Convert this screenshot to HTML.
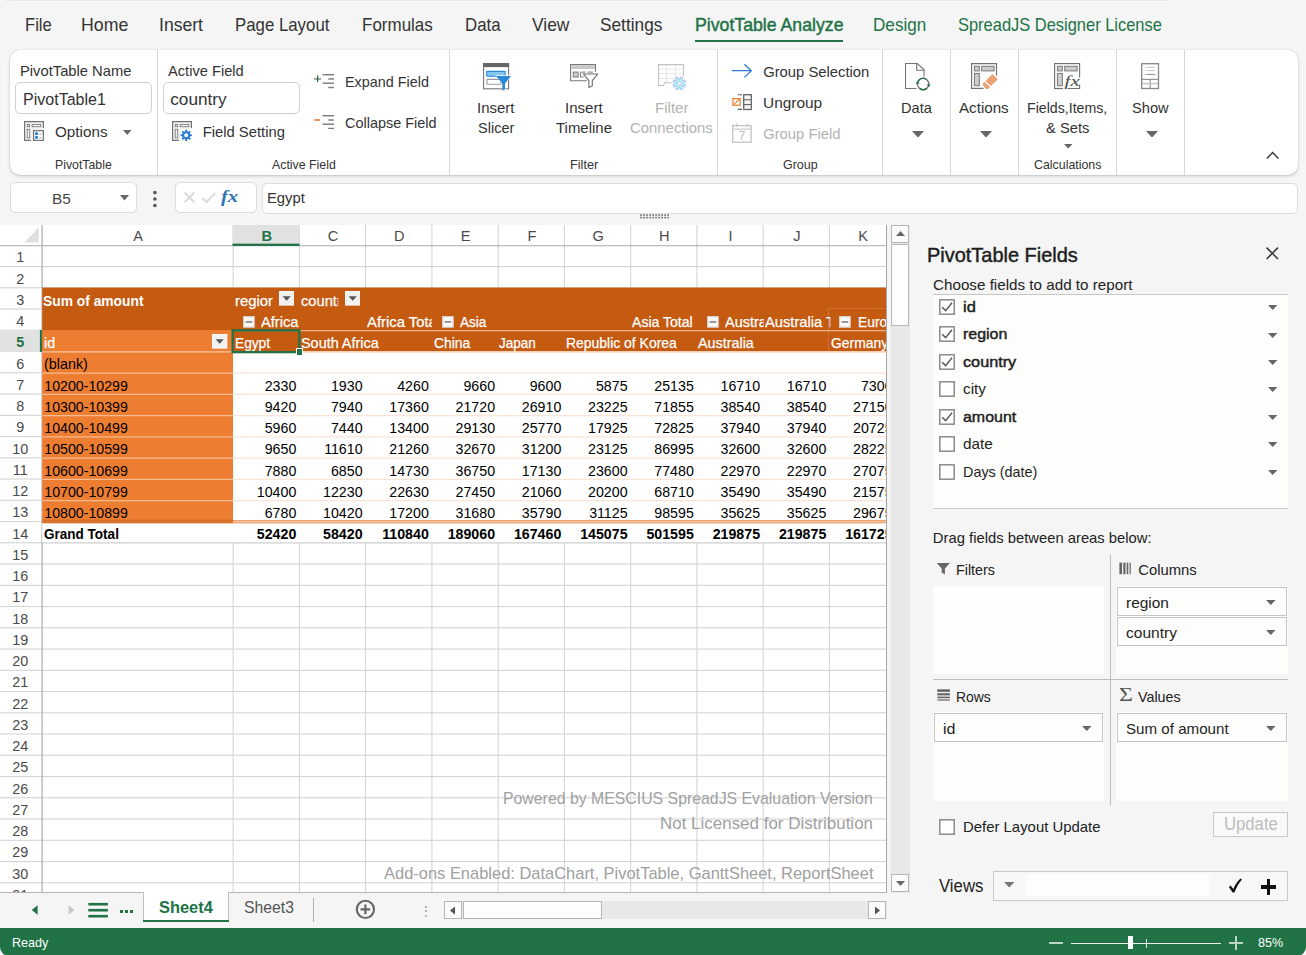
<!DOCTYPE html>
<html lang="en"><head><meta charset="utf-8"><title>PivotTable Designer</title>
<style>
html,body{margin:0;padding:0}
body{width:1306px;height:955px;overflow:hidden;background:#f5f5f5;font-family:"Liberation Sans",sans-serif;color:#333}
#app{position:relative;width:1306px;height:955px;overflow:hidden;background:#f5f5f5}
.t{position:absolute;white-space:nowrap;display:block;transform-origin:0 0}
.box{position:absolute;box-sizing:border-box}
</style></head><body>
<div id="app">
<div style="position:absolute;left:8px;top:0px;width:1161px;height:1px;background:#e9e9e9;"></div>
<div style="position:absolute;left:8px;top:1px;width:1161px;height:1px;background:#f8f8f8;"></div>
<svg style="position:absolute;left:0px;top:0px;" width="10" height="10" viewBox="0 0 10 10"><path d="M0.6 9.5A8.9 8.9 0 0 1 9.5 0.6" fill="none" stroke="#ececec" stroke-width="1.1"/></svg>
<span class="t" style="left:24.85px;top:12.66px;font-size:18.6px;line-height:24px;transform:scaleX(0.8943);">File</span>
<span class="t" style="left:81.15px;top:12.66px;font-size:18.6px;line-height:24px;transform:scaleX(0.9534);">Home</span>
<span class="t" style="left:159.05px;top:12.66px;font-size:18.6px;line-height:24px;transform:scaleX(0.9459);">Insert</span>
<span class="t" style="left:234.75px;top:12.66px;font-size:18.6px;line-height:24px;transform:scaleX(0.9040);">Page Layout</span>
<span class="t" style="left:361.95px;top:12.66px;font-size:18.6px;line-height:24px;transform:scaleX(0.9135);">Formulas</span>
<span class="t" style="left:464.85px;top:12.66px;font-size:18.6px;line-height:24px;transform:scaleX(0.9063);">Data</span>
<span class="t" style="left:531.75px;top:12.66px;font-size:18.6px;line-height:24px;transform:scaleX(0.9357);">View</span>
<span class="t" style="left:600.05px;top:12.66px;font-size:18.6px;line-height:24px;transform:scaleX(0.9287);">Settings</span>
<span class="t" style="left:694.65px;top:12.66px;font-size:18.6px;line-height:24px;color:#217346;-webkit-text-stroke:0.45px currentColor;transform:scaleX(0.9514);">PivotTable Analyze</span>
<div style="position:absolute;left:694.5px;top:40px;width:148.5px;height:2px;background:#217346;"></div>
<span class="t" style="left:873.15px;top:12.66px;font-size:18.6px;line-height:24px;color:#217346;transform:scaleX(0.9207);">Design</span>
<span class="t" style="left:957.85px;top:12.66px;font-size:18.6px;line-height:24px;color:#217346;transform:scaleX(0.8846);">SpreadJS Designer License</span>
<div class="box" style="left:10px;top:50px;width:1288px;height:125px;background:#fff;border-radius:10px;box-shadow:0 1px 3px rgba(0,0,0,.22),0 0 1px rgba(0,0,0,.15)"></div>
<div style="position:absolute;left:157px;top:50px;width:1px;height:125px;background:#d6d6d6;"></div>
<div style="position:absolute;left:449px;top:50px;width:1px;height:125px;background:#d6d6d6;"></div>
<div style="position:absolute;left:717px;top:50px;width:1px;height:125px;background:#d6d6d6;"></div>
<div style="position:absolute;left:882px;top:50px;width:1px;height:125px;background:#d6d6d6;"></div>
<div style="position:absolute;left:950px;top:50px;width:1px;height:125px;background:#d6d6d6;"></div>
<div style="position:absolute;left:1018px;top:50px;width:1px;height:125px;background:#d6d6d6;"></div>
<div style="position:absolute;left:1116px;top:50px;width:1px;height:125px;background:#d6d6d6;"></div>
<div style="position:absolute;left:1184px;top:50px;width:1px;height:125px;background:#d6d6d6;"></div>
<span class="t" style="left:19.85px;top:61.97px;font-size:14.8px;line-height:19px;transform:scaleX(0.9959);">PivotTable Name</span>
<div class="box" style="left:15.4px;top:82.3px;width:136.4px;height:31.3px;background:#fff;border:1px solid #d0d0d0;border-radius:5px"></div>
<span class="t" style="left:22.65px;top:88.24px;font-size:17.2px;line-height:22px;transform:scaleX(0.9329);">PivotTable1</span>
<span class="t" style="left:54.75px;top:122.77px;font-size:14.8px;line-height:19px;transform:scaleX(1.0294);">Options</span>
<svg style="position:absolute;left:122.6px;top:129.5px;" width="8.4" height="5" viewBox="0 0 8.4 5"><path d="M0 0H8.4L4.2 5Z" fill="#666"/></svg>
<span class="t" style="left:55.45px;top:155.93px;font-size:13.2px;line-height:17px;transform:scaleX(0.9335);">PivotTable</span>
<span class="t" style="left:167.85px;top:61.97px;font-size:14.8px;line-height:19px;transform:scaleX(0.9897);">Active Field</span>
<div class="box" style="left:163.2px;top:82.3px;width:136.6px;height:31.3px;background:#fff;border:1px solid #d0d0d0;border-radius:5px"></div>
<span class="t" style="left:170.25px;top:88.24px;font-size:17.2px;line-height:22px;">country</span>
<span class="t" style="left:202.65px;top:122.77px;font-size:14.8px;line-height:19px;">Field Setting</span>
<span class="t" style="left:344.65px;top:72.77px;font-size:14.8px;line-height:19px;transform:scaleX(0.9713);">Expand Field</span>
<span class="t" style="left:344.65px;top:113.77px;font-size:14.8px;line-height:19px;transform:scaleX(0.9769);">Collapse Field</span>
<span class="t" style="left:271.75px;top:155.93px;font-size:13.2px;line-height:17px;transform:scaleX(0.9359);">Active Field</span>
<span class="t" style="left:477.45px;top:98.87px;font-size:14.8px;line-height:19px;transform:scaleX(1.0104);">Insert</span>
<span class="t" style="left:477.85px;top:118.77px;font-size:14.8px;line-height:19px;transform:scaleX(0.9811);">Slicer</span>
<span class="t" style="left:564.85px;top:98.87px;font-size:14.8px;line-height:19px;transform:scaleX(1.0185);">Insert</span>
<span class="t" style="left:556.05px;top:118.77px;font-size:14.8px;line-height:19px;transform:scaleX(1.0113);">Timeline</span>
<span class="t" style="left:654.65px;top:98.87px;font-size:14.8px;line-height:19px;color:#b3b3b3;transform:scaleX(1.0185);">Filter</span>
<span class="t" style="left:629.65px;top:118.77px;font-size:14.8px;line-height:19px;color:#b3b3b3;transform:scaleX(1.0065);">Connections</span>
<span class="t" style="left:569.75px;top:155.93px;font-size:13.2px;line-height:17px;transform:scaleX(0.9620);">Filter</span>
<span class="t" style="left:763.15px;top:62.77px;font-size:14.8px;line-height:19px;">Group Selection</span>
<span class="t" style="left:763.15px;top:93.77px;font-size:14.8px;line-height:19px;transform:scaleX(1.0429);">Ungroup</span>
<span class="t" style="left:763.15px;top:124.77px;font-size:14.8px;line-height:19px;color:#b3b3b3;">Group Field</span>
<span class="t" style="left:782.85px;top:155.93px;font-size:13.2px;line-height:17px;transform:scaleX(0.9439);">Group</span>
<span class="t" style="left:900.75px;top:98.87px;font-size:14.8px;line-height:19px;transform:scaleX(0.9851);">Data</span>
<svg style="position:absolute;left:912px;top:130.9px;" width="12" height="6.6" viewBox="0 0 12 6.6"><path d="M0 0H12L6 6.6Z" fill="#666"/></svg>
<span class="t" style="left:959.45px;top:98.87px;font-size:14.8px;line-height:19px;transform:scaleX(1.0241);">Actions</span>
<svg style="position:absolute;left:980px;top:130.9px;" width="12" height="6.6" viewBox="0 0 12 6.6"><path d="M0 0H12L6 6.6Z" fill="#666"/></svg>
<span class="t" style="left:1027.15px;top:98.87px;font-size:14.8px;line-height:19px;transform:scaleX(0.9574);">Fields,Items,</span>
<span class="t" style="left:1045.95px;top:118.77px;font-size:14.8px;line-height:19px;transform:scaleX(0.9956);">&amp; Sets</span>
<svg style="position:absolute;left:1064.1px;top:144.4px;" width="8.4" height="4.4" viewBox="0 0 8.4 4.4"><path d="M0 0H8.4L4.2 4.4Z" fill="#666"/></svg>
<span class="t" style="left:1033.95px;top:155.93px;font-size:13.2px;line-height:17px;transform:scaleX(0.9381);">Calculations</span>
<span class="t" style="left:1131.95px;top:98.87px;font-size:14.8px;line-height:19px;transform:scaleX(0.9888);">Show</span>
<svg style="position:absolute;left:1146px;top:130.9px;" width="12" height="6.6" viewBox="0 0 12 6.6"><path d="M0 0H12L6 6.6Z" fill="#666"/></svg>
<svg style="position:absolute;left:1265px;top:150px;" width="16" height="11" viewBox="0 0 16 11"><path d="M1.8 8.6L7.6 2.6L13.4 8.6" stroke="#333" stroke-width="1.5" fill="none"/></svg>
<svg style="position:absolute;left:24px;top:121px;" width="20.4" height="20.4" viewBox="0 0 20.4 20.4"><rect x="0.6" y="0.6" width="18.8" height="18.8" fill="#f3f3f3"/><path d="M19.4 7V0.6H0.6V19.4H7" fill="none" stroke="#727272" stroke-width="1.2"/><rect x="3.2" y="3.5" width="2.5" height="2.2" fill="#f4f4f4" stroke="#7d7d7d" stroke-width="0.9"/><rect x="8.2" y="3.5" width="8.6" height="2.2" fill="#f4f4f4" stroke="#7d7d7d" stroke-width="0.9"/><rect x="3.2" y="8.3" width="2.5" height="8.6" fill="#f4f4f4" stroke="#7d7d7d" stroke-width="0.9"/><rect x="9.6" y="9.7" width="9.8" height="9.7" fill="#fff" stroke="#727272" stroke-width="1.2"/><rect x="11.1" y="11.3" width="2.9" height="2.7" fill="#2f80d4"/><rect x="11.1" y="15.1" width="2.9" height="2.7" fill="#2f80d4"/><rect x="15.1" y="12.7" width="2.8" height="1" fill="#8fb6e2"/><rect x="15.1" y="16.3" width="2.8" height="1" fill="#8fb6e2"/></svg>
<svg style="position:absolute;left:172px;top:121px;" width="20.6" height="20.6" viewBox="0 0 20.6 20.6"><rect x="0.6" y="0.6" width="18.8" height="18.8" fill="#f3f3f3"/><path d="M19.4 7V0.6H0.6V19.4H7" fill="none" stroke="#727272" stroke-width="1.2"/><rect x="3.2" y="3.5" width="2.5" height="2.2" fill="#f4f4f4" stroke="#7d7d7d" stroke-width="0.9"/><rect x="8.2" y="3.5" width="8.6" height="2.2" fill="#f4f4f4" stroke="#7d7d7d" stroke-width="0.9"/><rect x="3.2" y="8.3" width="2.5" height="8.6" fill="#f4f4f4" stroke="#7d7d7d" stroke-width="0.9"/><rect x="8.4" y="8.4" width="12" height="12" fill="#fff"/><path d="M19.82 13.32L19.82 15.28L18.19 15.26L17.70 16.44L18.86 17.58L17.48 18.96L16.34 17.80L15.16 18.29L15.18 19.92L13.22 19.92L13.24 18.29L12.06 17.80L10.92 18.96L9.54 17.58L10.70 16.44L10.21 15.26L8.58 15.28L8.58 13.32L10.21 13.34L10.70 12.16L9.54 11.02L10.92 9.64L12.06 10.80L13.24 10.31L13.22 8.68L15.18 8.68L15.16 10.31L16.34 10.80L17.48 9.64L18.86 11.02L17.70 12.16L18.19 13.34ZM16.20 14.30A2.0 2.0 0 1 0 12.20 14.30A2.0 2.0 0 1 0 16.20 14.30Z" fill="#2b7cd3" fill-rule="evenodd"/></svg>
<svg style="position:absolute;left:314px;top:74px;" width="20.2" height="14.6" viewBox="0 0 20.2 14.6"><rect x="0" y="4.2" width="7.1" height="1.5" fill="#8a8a8a"/><rect x="3" y="1.5" width="1.3" height="6.6" fill="#217346"/><rect x="8.6" y="0" width="11.4" height="1.4" fill="#7a7a7a"/><rect x="14.2" y="4.3" width="5.8" height="1.4" fill="#7a7a7a"/><rect x="8.6" y="8.5" width="11.4" height="1.4" fill="#7a7a7a"/><rect x="14.2" y="12.8" width="5.8" height="1.4" fill="#7a7a7a"/></svg>
<svg style="position:absolute;left:314px;top:114.9px;" width="20.2" height="14.6" viewBox="0 0 20.2 14.6"><rect x="0" y="4.1" width="6" height="1.8" fill="#ec8f55"/><rect x="8.6" y="0" width="11.4" height="1.4" fill="#7a7a7a"/><rect x="14.2" y="4.3" width="5.8" height="1.4" fill="#7a7a7a"/><rect x="8.6" y="8.5" width="11.4" height="1.4" fill="#7a7a7a"/><rect x="14.2" y="12.8" width="5.8" height="1.4" fill="#7a7a7a"/></svg>
<svg style="position:absolute;left:483px;top:63px;" width="30" height="29" viewBox="0 0 30 29"><rect x="0.6" y="0.6" width="25" height="25.2" fill="#fff" stroke="#777" stroke-width="1.1"/><rect x="0.1" y="0.1" width="26" height="4" fill="#666"/><rect x="3.7" y="8.4" width="18.5" height="4.9" rx="0.6" fill="#83c7f6" stroke="#2b88d8" stroke-width="1.1"/><rect x="3.9" y="16.4" width="14" height="4.9" rx="0.6" fill="#fff" stroke="#9a9a9a" stroke-width="1.1"/><path d="M12 12.3H29L22.6 20.6V27L19.2 28V20.6Z" fill="#fff"/><path d="M12.9 13.1H28L22 20.4V26.5L19.3 27.7V20.4Z" fill="#2b88d8"/></svg>
<svg style="position:absolute;left:570px;top:64px;" width="30" height="26" viewBox="0 0 30 26"><path d="M25.5 8V0.6H0.6V16.7H16.8" fill="#fff" stroke="#777" stroke-width="1.1"/><rect x="1.2" y="1.4" width="23.8" height="3.6" fill="#c9c9c9"/><rect x="3.3" y="8.1" width="4.8" height="4.9" fill="#cfcfcf" stroke="#777" stroke-width="1"/><path d="M15.4 8.1H10.6V13H13.6" fill="none" stroke="#777" stroke-width="1"/><rect x="17.6" y="7.6" width="5.4" height="1" fill="#777"/><path d="M13.3 9.9H27.8L22.3 16.6V21.8L18.9 23.6V16.6Z" fill="#fff" stroke="#6a6a6a" stroke-width="1.05" stroke-linejoin="round"/></svg>
<svg style="position:absolute;left:658px;top:64px;" width="29" height="27" viewBox="0 0 29 27"><path d="M25.5 12.6V0.6H0.6V21.5H5.4L6.7 18.8H13.6" fill="#fff" stroke="#c2c2c2" stroke-width="1.1"/><rect x="7.9" y="1" width="0.9" height="17" fill="#e3e3e3"/><rect x="17" y="1" width="0.9" height="17" fill="#e3e3e3"/><rect x="1" y="4.6" width="24" height="0.9" fill="#e6e6e6"/><rect x="1" y="9.2" width="24" height="0.9" fill="#e6e6e6"/><rect x="1" y="14" width="24" height="0.9" fill="#e6e6e6"/><path d="M27.70 18.28L27.70 20.52L25.58 20.43L25.05 21.70L26.62 23.14L25.04 24.72L23.60 23.15L22.33 23.68L22.42 25.80L20.18 25.80L20.27 23.68L19.00 23.15L17.56 24.72L15.98 23.14L17.55 21.70L17.02 20.43L14.90 20.52L14.90 18.28L17.02 18.37L17.55 17.10L15.98 15.66L17.56 14.08L19.00 15.65L20.27 15.12L20.18 13.00L22.42 13.00L22.33 15.12L23.60 15.65L25.04 14.08L26.62 15.66L25.05 17.10L25.58 18.37ZM23.20 19.40A1.9 1.9 0 1 0 19.40 19.40A1.9 1.9 0 1 0 23.20 19.40Z" fill="#b9f0fb" stroke="#a9c4e6" stroke-width="0.9" fill-rule="evenodd" transform="rotate(22.5 21.3 19.4)"/></svg>
<svg style="position:absolute;left:731px;top:63px;" width="22" height="16" viewBox="0 0 22 16"><path d="M1 7.7H20.2M13.4 1.2L20.3 7.7L13.4 14.4" fill="none" stroke="#2b7cd3" stroke-width="1.25"/></svg>
<svg style="position:absolute;left:731.6px;top:93.7px;" width="21" height="17" viewBox="0 0 21 17"><path d="M9.4 1.6V0.7H5.6M5.6 15.4H9.4V14.4" fill="none" stroke="#666" stroke-width="1.1"/><rect x="0.9" y="4.6" width="7.3" height="6.6" fill="#fff" stroke="#ed7d31" stroke-width="1.2"/><path d="M1.4 10.6L7.8 5" stroke="#ed7d31" stroke-width="1.1"/><rect x="11.7" y="0.7" width="7.6" height="14.8" fill="#f4f4f4" stroke="#666" stroke-width="1.3"/><rect x="11.7" y="5.2" width="7.6" height="1.1" fill="#666"/><rect x="11.7" y="10" width="7.6" height="1.1" fill="#666"/></svg>
<svg style="position:absolute;left:731.9px;top:122.9px;" width="21" height="21" viewBox="0 0 21 21"><rect x="0.7" y="2.6" width="18.4" height="16.6" fill="#fff" stroke="#c4c4c4" stroke-width="1.3"/><rect x="0.7" y="5.6" width="18.4" height="1.1" fill="#c4c4c4"/><rect x="4.2" y="0.4" width="1.1" height="3.6" fill="#c4c4c4"/><rect x="14.6" y="0.4" width="1.1" height="3.6" fill="#c4c4c4"/><text x="9.9" y="17.2" font-family="Liberation Sans, sans-serif" font-size="12.6" fill="#c0c0c0" text-anchor="middle">7</text></svg>
<svg style="position:absolute;left:905px;top:63px;" width="27" height="28" viewBox="0 0 27 28"><path d="M11.5 25.5H0.5V0.5H12.3L19.1 6.8V13.4" fill="#fff" stroke="#737373" stroke-width="1.1"/><path d="M11.7 0.6V7.3H19" fill="none" stroke="#737373" stroke-width="1.1"/><circle cx="18.1" cy="21" r="5.7" fill="#fff" stroke="#6b6b6b" stroke-width="1.25"/><path d="M13.43 17.73A5.7 5.7 0 0 1 20.95 16.06" fill="none" stroke="#217346" stroke-width="1.4"/><path d="M21.76 25.37A5.7 5.7 0 0 1 14.83 25.67" fill="none" stroke="#217346" stroke-width="1.4"/><path d="M10.8 20.9L12.5 17.6L14.5 20.6Z" fill="#217346"/><path d="M21.8 21.6L23.9 24.6L25.5 21.3Z" fill="#217346"/></svg>
<svg style="position:absolute;left:971px;top:62.8px;" width="28" height="27" viewBox="0 0 28 27"><path d="M25.5 12.4V0.6H0.6V25.4H12.6" fill="#fff" stroke="#737373" stroke-width="1.15"/><rect x="3.4" y="3.3" width="4.9" height="4.6" fill="#cdcdcd" stroke="#777" stroke-width="1"/><rect x="10.7" y="3.3" width="12.4" height="4.6" fill="#cdcdcd" stroke="#777" stroke-width="1"/><rect x="3.4" y="10.4" width="4.9" height="12.3" fill="#cdcdcd" stroke="#777" stroke-width="1"/><path d="M21.3 10.9L26.9 16.2L19.8 23L14.5 17.9Z" fill="#eca172"/><path d="M13.1 18.6L18.9 24.1L17.3 25.9H15L12 22.5V20.7Z" fill="#eca172"/></svg>
<svg style="position:absolute;left:1054px;top:62.8px;" width="28" height="28" viewBox="0 0 28 28"><rect x="0.6" y="0.6" width="25" height="24.9" fill="#fff" stroke="#737373" stroke-width="1.15"/><rect x="3.4" y="3.3" width="4.9" height="4.6" fill="#cdcdcd" stroke="#777" stroke-width="1"/><rect x="10.7" y="3.3" width="12.4" height="4.6" fill="#cdcdcd" stroke="#777" stroke-width="1"/><rect x="3.4" y="10.4" width="4.9" height="12.3" fill="#cdcdcd" stroke="#777" stroke-width="1"/><rect x="9" y="11" width="18" height="16" fill="#fff"/><path d="M25.6 11V14.6M25.6 21.6V25.5H13.4" fill="none" stroke="#737373" stroke-width="1.15"/><path d="M7.4 25.5H0.6" fill="none" stroke="#737373" stroke-width="1.15"/><text x="10.6" y="22.9" font-family="Liberation Serif, serif" font-style="italic" font-size="15.6" fill="#4a4a4a" textLength="15.2" lengthAdjust="spacingAndGlyphs">fx</text></svg>
<svg style="position:absolute;left:1140.5px;top:62.8px;" width="19" height="27" viewBox="0 0 19 27"><rect x="0.7" y="0.7" width="16.8" height="24.8" fill="#fff" stroke="#8a8a8a" stroke-width="1.35"/><rect x="0.7" y="15.8" width="16.8" height="1.1" fill="#8a8a8a"/><rect x="8.6" y="16" width="1.1" height="9.6" fill="#8a8a8a"/><rect x="1.4" y="19.8" width="15.6" height="1.6" fill="#c3c5c3"/><rect x="3.6" y="3.8" width="1" height="1" fill="#c4c4c4"/><rect x="5.6" y="3.8" width="8.6" height="1" fill="#c4c4c4"/><rect x="3.6" y="7.1" width="1" height="1" fill="#c4c4c4"/><rect x="5.6" y="7.1" width="8.6" height="1" fill="#c4c4c4"/><rect x="3.6" y="10.9" width="1" height="1" fill="#8c8c8c"/><rect x="5.6" y="10.9" width="8.6" height="1" fill="#8c8c8c"/></svg>
<div class="box" style="left:10.3px;top:181.9px;width:126.4px;height:31.1px;background:#fff;border:1px solid #dcdcdc;border-radius:5px"></div>
<div class="box" style="left:175.2px;top:181.9px;width:81.6px;height:31.1px;background:#fff;border:1px solid #dcdcdc;border-radius:5px"></div>
<div class="box" style="left:262.2px;top:183.3px;width:1035.6px;height:30.7px;background:#fff;border:1px solid #dcdcdc;border-radius:5px"></div>
<span class="t" style="left:51.75px;top:188.90px;font-size:15.3px;line-height:20px;color:#444;transform:scaleX(1.0097);">B5</span>
<svg style="position:absolute;left:119.5px;top:195.45px;" width="9" height="5.5" viewBox="0 0 9 5.5"><path d="M0 0H9L4.5 5.5Z" fill="#666"/></svg>
<svg style="position:absolute;left:152px;top:190px;" width="6" height="18" viewBox="0 0 6 18"><circle cx="2.9" cy="2.6" r="1.8" fill="#555"/><circle cx="2.9" cy="9" r="1.8" fill="#555"/><circle cx="2.9" cy="15.5" r="1.8" fill="#555"/></svg>
<svg style="position:absolute;left:183px;top:191px;" width="56" height="16" viewBox="0 0 56 16"><path d="M1.6 1.5L11.4 11.3M11.4 1.5L1.6 11.3" stroke="#d9d9d9" stroke-width="1.9" fill="none"/><path d="M19.4 7.2L23.6 11.2L32.2 2" stroke="#d9d9d9" stroke-width="1.9" fill="none"/></svg>
<span class="t" style="left:220.75px;top:185.65px;font-size:16.6px;line-height:22px;color:#2e75b6;font-weight:700;font-style:italic;transform:scaleX(1.2438);font-family:'Liberation Serif',serif;">fx</span>
<span class="t" style="left:266.75px;top:188.03px;font-size:15.2px;line-height:20px;transform:scaleX(0.9731);">Egypt</span>
<svg style="position:absolute;left:639.5px;top:213.5px;" width="30" height="5" viewBox="0 0 30 5"><rect x="0.3" y="0.3" width="1.6" height="1.6" fill="#666"/><rect x="0.3" y="2.8" width="1.6" height="1.6" fill="#666"/><rect x="3.3" y="0.3" width="1.6" height="1.6" fill="#666"/><rect x="3.3" y="2.8" width="1.6" height="1.6" fill="#666"/><rect x="6.3" y="0.3" width="1.6" height="1.6" fill="#666"/><rect x="6.3" y="2.8" width="1.6" height="1.6" fill="#666"/><rect x="9.3" y="0.3" width="1.6" height="1.6" fill="#666"/><rect x="9.3" y="2.8" width="1.6" height="1.6" fill="#666"/><rect x="12.3" y="0.3" width="1.6" height="1.6" fill="#666"/><rect x="12.3" y="2.8" width="1.6" height="1.6" fill="#666"/><rect x="15.3" y="0.3" width="1.6" height="1.6" fill="#666"/><rect x="15.3" y="2.8" width="1.6" height="1.6" fill="#666"/><rect x="18.3" y="0.3" width="1.6" height="1.6" fill="#666"/><rect x="18.3" y="2.8" width="1.6" height="1.6" fill="#666"/><rect x="21.3" y="0.3" width="1.6" height="1.6" fill="#666"/><rect x="21.3" y="2.8" width="1.6" height="1.6" fill="#666"/><rect x="24.3" y="0.3" width="1.6" height="1.6" fill="#666"/><rect x="24.3" y="2.8" width="1.6" height="1.6" fill="#666"/><rect x="27.3" y="0.3" width="1.6" height="1.6" fill="#666"/><rect x="27.3" y="2.8" width="1.6" height="1.6" fill="#666"/></svg>
<div style="position:absolute;left:0px;top:225px;width:887px;height:668px;background:#fff;"></div>
<svg style="position:absolute;left:0px;top:225px;" width="887" height="668" viewBox="0 0 887 668"><rect x="0" y="41" width="887" height="1.1" fill="#d4d4d4"/><rect x="0" y="62.25" width="887" height="1.1" fill="#d4d4d4"/><rect x="0" y="83.5" width="887" height="1.1" fill="#d4d4d4"/><rect x="0" y="104.75" width="887" height="1.1" fill="#d4d4d4"/><rect x="0" y="126" width="887" height="1.1" fill="#d4d4d4"/><rect x="0" y="147.25" width="887" height="1.1" fill="#d4d4d4"/><rect x="0" y="168.5" width="887" height="1.1" fill="#d4d4d4"/><rect x="0" y="189.75" width="887" height="1.1" fill="#d4d4d4"/><rect x="0" y="211" width="887" height="1.1" fill="#d4d4d4"/><rect x="0" y="232.25" width="887" height="1.1" fill="#d4d4d4"/><rect x="0" y="253.5" width="887" height="1.1" fill="#d4d4d4"/><rect x="0" y="274.75" width="887" height="1.1" fill="#d4d4d4"/><rect x="0" y="296" width="887" height="1.1" fill="#d4d4d4"/><rect x="0" y="317.25" width="887" height="1.1" fill="#d4d4d4"/><rect x="0" y="338.5" width="887" height="1.1" fill="#d4d4d4"/><rect x="0" y="359.75" width="887" height="1.1" fill="#d4d4d4"/><rect x="0" y="381" width="887" height="1.1" fill="#d4d4d4"/><rect x="0" y="402.25" width="887" height="1.1" fill="#d4d4d4"/><rect x="0" y="423.5" width="887" height="1.1" fill="#d4d4d4"/><rect x="0" y="444.75" width="887" height="1.1" fill="#d4d4d4"/><rect x="0" y="466" width="887" height="1.1" fill="#d4d4d4"/><rect x="0" y="487.25" width="887" height="1.1" fill="#d4d4d4"/><rect x="0" y="508.5" width="887" height="1.1" fill="#d4d4d4"/><rect x="0" y="529.75" width="887" height="1.1" fill="#d4d4d4"/><rect x="0" y="551" width="887" height="1.1" fill="#d4d4d4"/><rect x="0" y="572.25" width="887" height="1.1" fill="#d4d4d4"/><rect x="0" y="593.5" width="887" height="1.1" fill="#d4d4d4"/><rect x="0" y="614.75" width="887" height="1.1" fill="#d4d4d4"/><rect x="0" y="636" width="887" height="1.1" fill="#d4d4d4"/><rect x="0" y="657.25" width="887" height="1.1" fill="#d4d4d4"/><rect x="232.6" y="0" width="1.1" height="668" fill="#d4d4d4"/><rect x="298.85" y="0" width="1.1" height="668" fill="#d4d4d4"/><rect x="365.1" y="0" width="1.1" height="668" fill="#d4d4d4"/><rect x="431.35" y="0" width="1.1" height="668" fill="#d4d4d4"/><rect x="497.6" y="0" width="1.1" height="668" fill="#d4d4d4"/><rect x="563.85" y="0" width="1.1" height="668" fill="#d4d4d4"/><rect x="630.1" y="0" width="1.1" height="668" fill="#d4d4d4"/><rect x="696.35" y="0" width="1.1" height="668" fill="#d4d4d4"/><rect x="762.6" y="0" width="1.1" height="668" fill="#d4d4d4"/><rect x="828.85" y="0" width="1.1" height="668" fill="#d4d4d4"/><rect x="0" y="20.25" width="887" height="1" fill="#ababab"/><rect x="41.5" y="0" width="1.2" height="668" fill="#ababab"/><path d="M38.8 2.6V17.4H24Z" fill="#dfdfdf"/><rect x="232.55" y="0" width="66.95" height="19.25" fill="#e1e1e1"/><rect x="232.55" y="18.65" width="66.95" height="2.3" fill="#217346"/><rect x="0" y="105.05" width="40.5" height="21.85" fill="#e1e1e1"/><rect x="39.9" y="105.05" width="2.3" height="21.85" fill="#217346"/><rect x="42.2" y="62.55" width="844.8" height="63.75" fill="#C55A11"/><rect x="42.2" y="105.05" width="190.85" height="191.25" fill="#ED7D31"/><rect x="233.05" y="126.3" width="653.95" height="191.25" fill="#fff"/><rect x="42.2" y="296.3" width="190.85" height="21.25" fill="#fff"/><rect x="233.05" y="105.05" width="653.95" height="1.2" fill="#efb38a"/><rect x="42.2" y="126.3" width="190.85" height="1.2" fill="#f7c9a8"/><rect x="233.05" y="126.3" width="653.95" height="1.2" fill="#f6c3a0"/><rect x="42.2" y="147.55" width="190.85" height="1.2" fill="#f6bd94"/><rect x="233.05" y="147.55" width="653.95" height="1.2" fill="#fbe3d3"/><rect x="42.2" y="168.8" width="190.85" height="1.2" fill="#f6bd94"/><rect x="233.05" y="168.8" width="653.95" height="1.2" fill="#fbe3d3"/><rect x="42.2" y="190.05" width="190.85" height="1.2" fill="#f6bd94"/><rect x="233.05" y="190.05" width="653.95" height="1.2" fill="#fbe3d3"/><rect x="42.2" y="211.3" width="190.85" height="1.2" fill="#f6bd94"/><rect x="233.05" y="211.3" width="653.95" height="1.2" fill="#fbe3d3"/><rect x="42.2" y="232.55" width="190.85" height="1.2" fill="#f6bd94"/><rect x="233.05" y="232.55" width="653.95" height="1.2" fill="#fbe3d3"/><rect x="42.2" y="253.8" width="190.85" height="1.2" fill="#f6bd94"/><rect x="233.05" y="253.8" width="653.95" height="1.2" fill="#fbe3d3"/><rect x="42.2" y="275.05" width="190.85" height="1.2" fill="#f6bd94"/><rect x="233.05" y="275.05" width="653.95" height="1.2" fill="#fbe3d3"/><rect x="42.2" y="294.7" width="190.85" height="3.6" fill="#d46c27"/><rect x="42.2" y="295.95" width="190.85" height="0.9" fill="#e57a30"/><rect x="233.05" y="295" width="653.95" height="3.4" fill="#eea06e"/><rect x="233.05" y="296.1" width="653.95" height="1.1" fill="#f6cbad"/><rect x="42.2" y="317.25" width="844.8" height="1.1" fill="#d4d4d4"/></svg>
<span class="t" style="left:133.26px;top:226.64px;font-size:14.6px;line-height:19px;color:#4a4a4a;">A</span>
<span class="t" style="left:261.60px;top:226.64px;font-size:14.6px;line-height:19px;color:#217346;font-weight:700;">B</span>
<span class="t" style="left:327.85px;top:226.64px;font-size:14.6px;line-height:19px;color:#4a4a4a;">C</span>
<span class="t" style="left:394.10px;top:226.64px;font-size:14.6px;line-height:19px;color:#4a4a4a;">D</span>
<span class="t" style="left:460.76px;top:226.64px;font-size:14.6px;line-height:19px;color:#4a4a4a;">E</span>
<span class="t" style="left:527.41px;top:226.64px;font-size:14.6px;line-height:19px;color:#4a4a4a;">F</span>
<span class="t" style="left:592.45px;top:226.64px;font-size:14.6px;line-height:19px;color:#4a4a4a;">G</span>
<span class="t" style="left:659.10px;top:226.64px;font-size:14.6px;line-height:19px;color:#4a4a4a;">H</span>
<span class="t" style="left:728.59px;top:226.64px;font-size:14.6px;line-height:19px;color:#4a4a4a;">I</span>
<span class="t" style="left:793.23px;top:226.64px;font-size:14.6px;line-height:19px;color:#4a4a4a;">J</span>
<span class="t" style="left:858.26px;top:226.64px;font-size:14.6px;line-height:19px;color:#4a4a4a;">K</span>
<span class="t" style="left:16.24px;top:248.26px;font-size:14.4px;line-height:19px;color:#4a4a4a;">1</span>
<span class="t" style="left:16.24px;top:269.51px;font-size:14.4px;line-height:19px;color:#4a4a4a;">2</span>
<span class="t" style="left:16.24px;top:290.76px;font-size:14.4px;line-height:19px;color:#4a4a4a;">3</span>
<span class="t" style="left:16.24px;top:312.01px;font-size:14.4px;line-height:19px;color:#4a4a4a;">4</span>
<span class="t" style="left:16.24px;top:333.26px;font-size:14.4px;line-height:19px;color:#217346;font-weight:700;">5</span>
<span class="t" style="left:16.24px;top:354.51px;font-size:14.4px;line-height:19px;color:#4a4a4a;">6</span>
<span class="t" style="left:16.24px;top:375.76px;font-size:14.4px;line-height:19px;color:#4a4a4a;">7</span>
<span class="t" style="left:16.24px;top:397.01px;font-size:14.4px;line-height:19px;color:#4a4a4a;">8</span>
<span class="t" style="left:16.24px;top:418.26px;font-size:14.4px;line-height:19px;color:#4a4a4a;">9</span>
<span class="t" style="left:12.24px;top:439.51px;font-size:14.4px;line-height:19px;color:#4a4a4a;">10</span>
<span class="t" style="left:12.77px;top:460.76px;font-size:14.4px;line-height:19px;color:#4a4a4a;">11</span>
<span class="t" style="left:12.24px;top:482.01px;font-size:14.4px;line-height:19px;color:#4a4a4a;">12</span>
<span class="t" style="left:12.24px;top:503.26px;font-size:14.4px;line-height:19px;color:#4a4a4a;">13</span>
<span class="t" style="left:12.24px;top:524.51px;font-size:14.4px;line-height:19px;color:#4a4a4a;">14</span>
<span class="t" style="left:12.24px;top:545.76px;font-size:14.4px;line-height:19px;color:#4a4a4a;">15</span>
<span class="t" style="left:12.24px;top:567.01px;font-size:14.4px;line-height:19px;color:#4a4a4a;">16</span>
<span class="t" style="left:12.24px;top:588.26px;font-size:14.4px;line-height:19px;color:#4a4a4a;">17</span>
<span class="t" style="left:12.24px;top:609.51px;font-size:14.4px;line-height:19px;color:#4a4a4a;">18</span>
<span class="t" style="left:12.24px;top:630.76px;font-size:14.4px;line-height:19px;color:#4a4a4a;">19</span>
<span class="t" style="left:12.24px;top:652.01px;font-size:14.4px;line-height:19px;color:#4a4a4a;">20</span>
<span class="t" style="left:12.24px;top:673.26px;font-size:14.4px;line-height:19px;color:#4a4a4a;">21</span>
<span class="t" style="left:12.24px;top:694.51px;font-size:14.4px;line-height:19px;color:#4a4a4a;">22</span>
<span class="t" style="left:12.24px;top:715.76px;font-size:14.4px;line-height:19px;color:#4a4a4a;">23</span>
<span class="t" style="left:12.24px;top:737.01px;font-size:14.4px;line-height:19px;color:#4a4a4a;">24</span>
<span class="t" style="left:12.24px;top:758.26px;font-size:14.4px;line-height:19px;color:#4a4a4a;">25</span>
<span class="t" style="left:12.24px;top:779.51px;font-size:14.4px;line-height:19px;color:#4a4a4a;">26</span>
<span class="t" style="left:12.24px;top:800.76px;font-size:14.4px;line-height:19px;color:#4a4a4a;">27</span>
<span class="t" style="left:12.24px;top:822.01px;font-size:14.4px;line-height:19px;color:#4a4a4a;">28</span>
<span class="t" style="left:12.24px;top:843.26px;font-size:14.4px;line-height:19px;color:#4a4a4a;">29</span>
<span class="t" style="left:12.24px;top:864.51px;font-size:14.4px;line-height:19px;color:#4a4a4a;">30</span>
<span class="t" style="left:12.24px;top:885.76px;font-size:14.4px;line-height:19px;color:#4a4a4a;">31</span>
<span class="t" style="left:43.25px;top:291.53px;font-size:14.2px;line-height:18px;color:#fff;font-weight:700;transform:scaleX(0.9734);">Sum of amount</span>
<span class="t" style="left:235.05px;top:291.53px;font-size:14.2px;line-height:18px;color:#fff;transform:scaleX(1.0468);width:35.54px;overflow:hidden;-webkit-text-stroke:0.25px #fff;">region</span>
<svg style="position:absolute;left:278.5px;top:291.2px;" width="15.4" height="14.6" viewBox="0 0 15.4 14.6"><rect x="0.5" y="0.5" width="14.4" height="13.6" fill="#f1f1f1" stroke="#fafafa" stroke-width="1"/><path d="M3.6 5.2H11.8L7.7 9.7Z" fill="#555"/></svg>
<span class="t" style="left:300.85px;top:291.53px;font-size:14.2px;line-height:18px;color:#fff;transform:scaleX(1.0337);width:35.99px;overflow:hidden;-webkit-text-stroke:0.25px #fff;">country</span>
<svg style="position:absolute;left:344.7px;top:291.2px;" width="15.4" height="14.6" viewBox="0 0 15.4 14.6"><rect x="0.5" y="0.5" width="14.4" height="13.6" fill="#f1f1f1" stroke="#fafafa" stroke-width="1"/><path d="M3.6 5.2H11.8L7.7 9.7Z" fill="#555"/></svg>
<svg style="position:absolute;left:243.15px;top:316px;" width="11.8" height="11.8" viewBox="0 0 11.8 11.8"><rect x="0.6" y="0.6" width="10.6" height="10.6" fill="#fbfbfb" stroke="#d8cfc8" stroke-width="1.2"/><rect x="2.6" y="5.2" width="6.6" height="1.5" fill="#7a7a7a"/></svg>
<span class="t" style="left:261.30px;top:312.78px;font-size:14.2px;line-height:18px;color:#fff;transform:scaleX(1.0313);width:37.28px;overflow:hidden;-webkit-text-stroke:0.25px #fff;">Africa</span>
<svg style="position:absolute;left:441.9px;top:316px;" width="11.8" height="11.8" viewBox="0 0 11.8 11.8"><rect x="0.6" y="0.6" width="10.6" height="10.6" fill="#fbfbfb" stroke="#d8cfc8" stroke-width="1.2"/><rect x="2.6" y="5.2" width="6.6" height="1.5" fill="#7a7a7a"/></svg>
<span class="t" style="left:460.05px;top:312.78px;font-size:14.2px;line-height:18px;color:#fff;transform:scaleX(0.9562);width:40.21px;overflow:hidden;-webkit-text-stroke:0.25px #fff;">Asia</span>
<svg style="position:absolute;left:706.9px;top:316px;" width="11.8" height="11.8" viewBox="0 0 11.8 11.8"><rect x="0.6" y="0.6" width="10.6" height="10.6" fill="#fbfbfb" stroke="#d8cfc8" stroke-width="1.2"/><rect x="2.6" y="5.2" width="6.6" height="1.5" fill="#7a7a7a"/></svg>
<span class="t" style="left:725.05px;top:312.78px;font-size:14.2px;line-height:18px;color:#fff;transform:scaleX(1.0199);width:37.70px;overflow:hidden;-webkit-text-stroke:0.25px #fff;">Australia</span>
<svg style="position:absolute;left:839.4px;top:316px;" width="11.8" height="11.8" viewBox="0 0 11.8 11.8"><rect x="0.6" y="0.6" width="10.6" height="10.6" fill="#fbfbfb" stroke="#d8cfc8" stroke-width="1.2"/><rect x="2.6" y="5.2" width="6.6" height="1.5" fill="#7a7a7a"/></svg>
<span class="t" style="left:857.55px;top:312.78px;font-size:14.2px;line-height:18px;color:#fff;transform:scaleX(0.9749);width:39.44px;overflow:hidden;-webkit-text-stroke:0.25px #fff;">Europe</span>
<span class="t" style="left:367.45px;top:312.78px;font-size:14.2px;line-height:18px;color:#fff;transform:scaleX(1.0455);width:61.79px;overflow:hidden;-webkit-text-stroke:0.25px #fff;">Africa Total</span>
<span class="t" style="left:632.05px;top:312.78px;font-size:14.2px;line-height:18px;color:#fff;transform:scaleX(0.9908);-webkit-text-stroke:0.25px #fff;">Asia Total</span>
<span class="t" style="left:764.75px;top:312.78px;font-size:14.2px;line-height:18px;color:#fff;transform:scaleX(1.0365);width:62.52px;overflow:hidden;-webkit-text-stroke:0.25px #fff;">Australia Total</span>
<span class="t" style="left:43.65px;top:334.03px;font-size:14.2px;line-height:18px;color:#fff;transform:scaleX(1.0139);-webkit-text-stroke:0.25px #fff;">id</span>
<svg style="position:absolute;left:212.4px;top:334px;" width="15.4" height="14.6" viewBox="0 0 15.4 14.6"><rect x="0.5" y="0.5" width="14.4" height="13.6" fill="#f1f1f1" stroke="#fafafa" stroke-width="1"/><path d="M3.6 5.2H11.8L7.7 9.7Z" fill="#555"/></svg>
<span class="t" style="left:235.05px;top:334.03px;font-size:14.2px;line-height:18px;color:#fff;transform:scaleX(0.9647);-webkit-text-stroke:0.25px #fff;">Egypt</span>
<span class="t" style="left:300.85px;top:334.03px;font-size:14.2px;line-height:18px;color:#fff;transform:scaleX(1.0157);-webkit-text-stroke:0.25px #fff;">South Africa</span>
<span class="t" style="left:433.65px;top:334.03px;font-size:14.2px;line-height:18px;color:#fff;transform:scaleX(0.9763);-webkit-text-stroke:0.25px #fff;">China</span>
<span class="t" style="left:499.25px;top:334.03px;font-size:14.2px;line-height:18px;color:#fff;transform:scaleX(0.9520);-webkit-text-stroke:0.25px #fff;">Japan</span>
<span class="t" style="left:566.15px;top:334.03px;font-size:14.2px;line-height:18px;color:#fff;transform:scaleX(0.9824);-webkit-text-stroke:0.25px #fff;">Republic of Korea</span>
<span class="t" style="left:698.25px;top:334.03px;font-size:14.2px;line-height:18px;color:#fff;transform:scaleX(1.0108);-webkit-text-stroke:0.25px #fff;">Australia</span>
<span class="t" style="left:830.65px;top:334.03px;font-size:14.2px;line-height:18px;color:#fff;transform:scaleX(0.9787);-webkit-text-stroke:0.25px #fff;">Germany</span>
<span class="t" style="left:43.95px;top:355.28px;font-size:14.2px;line-height:18px;color:#000;transform:scaleX(1.0121);">(blank)</span>
<span class="t" style="left:44.25px;top:376.53px;font-size:14.2px;line-height:18px;color:#000;">10200-10299</span>
<span class="t" style="left:264.74px;top:376.53px;font-size:14.2px;line-height:18px;color:#000;">2330</span>
<span class="t" style="left:330.99px;top:376.53px;font-size:14.2px;line-height:18px;color:#000;">1930</span>
<span class="t" style="left:397.24px;top:376.53px;font-size:14.2px;line-height:18px;color:#000;">4260</span>
<span class="t" style="left:463.49px;top:376.53px;font-size:14.2px;line-height:18px;color:#000;">9660</span>
<span class="t" style="left:529.74px;top:376.53px;font-size:14.2px;line-height:18px;color:#000;">9600</span>
<span class="t" style="left:595.99px;top:376.53px;font-size:14.2px;line-height:18px;color:#000;">5875</span>
<span class="t" style="left:654.35px;top:376.53px;font-size:14.2px;line-height:18px;color:#000;">25135</span>
<span class="t" style="left:720.60px;top:376.53px;font-size:14.2px;line-height:18px;color:#000;">16710</span>
<span class="t" style="left:786.85px;top:376.53px;font-size:14.2px;line-height:18px;color:#000;">16710</span>
<span class="t" style="left:860.99px;top:376.53px;font-size:14.2px;line-height:18px;color:#000;">7300</span>
<span class="t" style="left:44.25px;top:397.78px;font-size:14.2px;line-height:18px;color:#000;">10300-10399</span>
<span class="t" style="left:264.74px;top:397.78px;font-size:14.2px;line-height:18px;color:#000;">9420</span>
<span class="t" style="left:330.99px;top:397.78px;font-size:14.2px;line-height:18px;color:#000;">7940</span>
<span class="t" style="left:389.35px;top:397.78px;font-size:14.2px;line-height:18px;color:#000;">17360</span>
<span class="t" style="left:455.60px;top:397.78px;font-size:14.2px;line-height:18px;color:#000;">21720</span>
<span class="t" style="left:521.85px;top:397.78px;font-size:14.2px;line-height:18px;color:#000;">26910</span>
<span class="t" style="left:588.10px;top:397.78px;font-size:14.2px;line-height:18px;color:#000;">23225</span>
<span class="t" style="left:654.35px;top:397.78px;font-size:14.2px;line-height:18px;color:#000;">71855</span>
<span class="t" style="left:720.60px;top:397.78px;font-size:14.2px;line-height:18px;color:#000;">38540</span>
<span class="t" style="left:786.85px;top:397.78px;font-size:14.2px;line-height:18px;color:#000;">38540</span>
<span class="t" style="left:853.10px;top:397.78px;font-size:14.2px;line-height:18px;color:#000;">27150</span>
<span class="t" style="left:44.25px;top:419.03px;font-size:14.2px;line-height:18px;color:#000;">10400-10499</span>
<span class="t" style="left:264.74px;top:419.03px;font-size:14.2px;line-height:18px;color:#000;">5960</span>
<span class="t" style="left:330.99px;top:419.03px;font-size:14.2px;line-height:18px;color:#000;">7440</span>
<span class="t" style="left:389.35px;top:419.03px;font-size:14.2px;line-height:18px;color:#000;">13400</span>
<span class="t" style="left:455.60px;top:419.03px;font-size:14.2px;line-height:18px;color:#000;">29130</span>
<span class="t" style="left:521.85px;top:419.03px;font-size:14.2px;line-height:18px;color:#000;">25770</span>
<span class="t" style="left:588.10px;top:419.03px;font-size:14.2px;line-height:18px;color:#000;">17925</span>
<span class="t" style="left:654.35px;top:419.03px;font-size:14.2px;line-height:18px;color:#000;">72825</span>
<span class="t" style="left:720.60px;top:419.03px;font-size:14.2px;line-height:18px;color:#000;">37940</span>
<span class="t" style="left:786.85px;top:419.03px;font-size:14.2px;line-height:18px;color:#000;">37940</span>
<span class="t" style="left:853.10px;top:419.03px;font-size:14.2px;line-height:18px;color:#000;">20725</span>
<span class="t" style="left:44.25px;top:440.28px;font-size:14.2px;line-height:18px;color:#000;">10500-10599</span>
<span class="t" style="left:264.74px;top:440.28px;font-size:14.2px;line-height:18px;color:#000;">9650</span>
<span class="t" style="left:324.14px;top:440.28px;font-size:14.2px;line-height:18px;color:#000;">11610</span>
<span class="t" style="left:389.35px;top:440.28px;font-size:14.2px;line-height:18px;color:#000;">21260</span>
<span class="t" style="left:455.60px;top:440.28px;font-size:14.2px;line-height:18px;color:#000;">32670</span>
<span class="t" style="left:521.85px;top:440.28px;font-size:14.2px;line-height:18px;color:#000;">31200</span>
<span class="t" style="left:588.10px;top:440.28px;font-size:14.2px;line-height:18px;color:#000;">23125</span>
<span class="t" style="left:654.35px;top:440.28px;font-size:14.2px;line-height:18px;color:#000;">86995</span>
<span class="t" style="left:720.60px;top:440.28px;font-size:14.2px;line-height:18px;color:#000;">32600</span>
<span class="t" style="left:786.85px;top:440.28px;font-size:14.2px;line-height:18px;color:#000;">32600</span>
<span class="t" style="left:853.10px;top:440.28px;font-size:14.2px;line-height:18px;color:#000;">28225</span>
<span class="t" style="left:44.25px;top:461.53px;font-size:14.2px;line-height:18px;color:#000;">10600-10699</span>
<span class="t" style="left:264.74px;top:461.53px;font-size:14.2px;line-height:18px;color:#000;">7880</span>
<span class="t" style="left:330.99px;top:461.53px;font-size:14.2px;line-height:18px;color:#000;">6850</span>
<span class="t" style="left:389.35px;top:461.53px;font-size:14.2px;line-height:18px;color:#000;">14730</span>
<span class="t" style="left:455.60px;top:461.53px;font-size:14.2px;line-height:18px;color:#000;">36750</span>
<span class="t" style="left:521.85px;top:461.53px;font-size:14.2px;line-height:18px;color:#000;">17130</span>
<span class="t" style="left:588.10px;top:461.53px;font-size:14.2px;line-height:18px;color:#000;">23600</span>
<span class="t" style="left:654.35px;top:461.53px;font-size:14.2px;line-height:18px;color:#000;">77480</span>
<span class="t" style="left:720.60px;top:461.53px;font-size:14.2px;line-height:18px;color:#000;">22970</span>
<span class="t" style="left:786.85px;top:461.53px;font-size:14.2px;line-height:18px;color:#000;">22970</span>
<span class="t" style="left:853.10px;top:461.53px;font-size:14.2px;line-height:18px;color:#000;">27075</span>
<span class="t" style="left:44.25px;top:482.78px;font-size:14.2px;line-height:18px;color:#000;">10700-10799</span>
<span class="t" style="left:256.85px;top:482.78px;font-size:14.2px;line-height:18px;color:#000;">10400</span>
<span class="t" style="left:323.10px;top:482.78px;font-size:14.2px;line-height:18px;color:#000;">12230</span>
<span class="t" style="left:389.35px;top:482.78px;font-size:14.2px;line-height:18px;color:#000;">22630</span>
<span class="t" style="left:455.60px;top:482.78px;font-size:14.2px;line-height:18px;color:#000;">27450</span>
<span class="t" style="left:521.85px;top:482.78px;font-size:14.2px;line-height:18px;color:#000;">21060</span>
<span class="t" style="left:588.10px;top:482.78px;font-size:14.2px;line-height:18px;color:#000;">20200</span>
<span class="t" style="left:654.35px;top:482.78px;font-size:14.2px;line-height:18px;color:#000;">68710</span>
<span class="t" style="left:720.60px;top:482.78px;font-size:14.2px;line-height:18px;color:#000;">35490</span>
<span class="t" style="left:786.85px;top:482.78px;font-size:14.2px;line-height:18px;color:#000;">35490</span>
<span class="t" style="left:853.10px;top:482.78px;font-size:14.2px;line-height:18px;color:#000;">21575</span>
<span class="t" style="left:44.25px;top:504.03px;font-size:14.2px;line-height:18px;color:#000;">10800-10899</span>
<span class="t" style="left:264.74px;top:504.03px;font-size:14.2px;line-height:18px;color:#000;">6780</span>
<span class="t" style="left:323.10px;top:504.03px;font-size:14.2px;line-height:18px;color:#000;">10420</span>
<span class="t" style="left:389.35px;top:504.03px;font-size:14.2px;line-height:18px;color:#000;">17200</span>
<span class="t" style="left:455.60px;top:504.03px;font-size:14.2px;line-height:18px;color:#000;">31680</span>
<span class="t" style="left:521.85px;top:504.03px;font-size:14.2px;line-height:18px;color:#000;">35790</span>
<span class="t" style="left:589.14px;top:504.03px;font-size:14.2px;line-height:18px;color:#000;">31125</span>
<span class="t" style="left:654.35px;top:504.03px;font-size:14.2px;line-height:18px;color:#000;">98595</span>
<span class="t" style="left:720.60px;top:504.03px;font-size:14.2px;line-height:18px;color:#000;">35625</span>
<span class="t" style="left:786.85px;top:504.03px;font-size:14.2px;line-height:18px;color:#000;">35625</span>
<span class="t" style="left:853.10px;top:504.03px;font-size:14.2px;line-height:18px;color:#000;">29675</span>
<span class="t" style="left:43.65px;top:525.28px;font-size:14.2px;line-height:18px;color:#000;font-weight:700;transform:scaleX(0.9534);">Grand Total</span>
<span class="t" style="left:256.85px;top:525.28px;font-size:14.2px;line-height:18px;color:#000;font-weight:700;">52420</span>
<span class="t" style="left:323.10px;top:525.28px;font-size:14.2px;line-height:18px;color:#000;font-weight:700;">58420</span>
<span class="t" style="left:382.24px;top:525.28px;font-size:14.2px;line-height:18px;color:#000;font-weight:700;">110840</span>
<span class="t" style="left:447.71px;top:525.28px;font-size:14.2px;line-height:18px;color:#000;font-weight:700;">189060</span>
<span class="t" style="left:513.96px;top:525.28px;font-size:14.2px;line-height:18px;color:#000;font-weight:700;">167460</span>
<span class="t" style="left:580.21px;top:525.28px;font-size:14.2px;line-height:18px;color:#000;font-weight:700;">145075</span>
<span class="t" style="left:646.46px;top:525.28px;font-size:14.2px;line-height:18px;color:#000;font-weight:700;">501595</span>
<span class="t" style="left:712.71px;top:525.28px;font-size:14.2px;line-height:18px;color:#000;font-weight:700;">219875</span>
<span class="t" style="left:778.96px;top:525.28px;font-size:14.2px;line-height:18px;color:#000;font-weight:700;">219875</span>
<span class="t" style="left:845.21px;top:525.28px;font-size:14.2px;line-height:18px;color:#000;font-weight:700;">161725</span>
<svg style="position:absolute;left:228px;top:326px;" width="78" height="32" viewBox="0 0 78 32"><rect x="4.65" y="4.35" width="66.7" height="21.8" fill="none" stroke="#217346" stroke-width="2.3"/></svg>
<div style="position:absolute;left:296.4px;top:348.9px;width:6.6px;height:6.6px;background:#217346;border:1px solid #fff;box-sizing:border-box;width:7.6px;height:7.6px;margin:-0.5px"></div>
<div class="box" style="left:828px;top:308px;width:70px;height:45.5px;border:1px solid rgba(255,255,255,.13)"></div>
<span class="t" style="left:503.45px;top:788.22px;font-size:16.1px;line-height:21px;color:#a0a0a0;transform:scaleX(0.9840);">Powered by MESCIUS SpreadJS Evaluation Version</span>
<span class="t" style="left:660.15px;top:813.32px;font-size:16.1px;line-height:21px;color:#a0a0a0;transform:scaleX(1.0536);">Not Licensed for Distribution</span>
<span class="t" style="left:383.65px;top:863.42px;font-size:16.1px;line-height:21px;color:#a0a0a0;transform:scaleX(1.0227);">Add-ons Enabled: DataChart, PivotTable, GanttSheet, ReportSheet</span>
<div style="position:absolute;left:887px;top:224px;width:419px;height:735px;background:#f5f5f5;"></div>
<div style="position:absolute;left:886.2px;top:225px;width:1px;height:668px;background:#a4a4a4;"></div>
<div style="position:absolute;left:891px;top:225px;width:18.6px;height:668px;background:#e8e8e8;"></div>
<div class="box" style="left:891px;top:225px;width:18px;height:18px;background:#fbfbfb;border:1px solid #b5b5b5"></div>
<svg style="transform:rotate(180deg);position:absolute;left:895.5px;top:230.9px;" width="9" height="5" viewBox="0 0 9 5"><path d="M0 0H9L4.5 5Z" fill="#666"/></svg>
<div class="box" style="left:891px;top:244px;width:18px;height:82px;background:#fdfdfd;border:1px solid #b5b5b5"></div>
<div class="box" style="left:891px;top:874px;width:18px;height:18px;background:#fbfbfb;border:1px solid #b5b5b5"></div>
<svg style="position:absolute;left:895.5px;top:880.7px;" width="9" height="5" viewBox="0 0 9 5"><path d="M0 0H9L4.5 5Z" fill="#666"/></svg>
<div style="position:absolute;left:0px;top:893px;width:887px;height:35px;background:#f5f5f5;"></div>
<div style="position:absolute;left:0px;top:892.1px;width:887px;height:1.1px;background:#b4b4b4;"></div>
<svg style="position:absolute;left:30px;top:903px;" width="10" height="14" viewBox="0 0 10 14"><path d="M7.6 2.2V11.8L1.8 7Z" fill="#217346"/></svg>
<svg style="position:absolute;left:66px;top:903px;" width="10" height="14" viewBox="0 0 10 14"><path d="M2.6 2.2V11.8L8.4 7Z" fill="#c8c8c8"/></svg>
<svg style="position:absolute;left:88px;top:902px;" width="21" height="17" viewBox="0 0 21 17"><rect x="0.3" y="0.9" width="19.6" height="2.6" fill="#217346"/><rect x="0.3" y="6.9" width="19.6" height="2.6" fill="#217346"/><rect x="0.3" y="12.9" width="19.6" height="2.6" fill="#217346"/></svg>
<div style="position:absolute;left:120px;top:909.8px;width:2.9px;height:2.9px;background:#217346;"></div>
<div style="position:absolute;left:124.9px;top:909.8px;width:2.9px;height:2.9px;background:#217346;"></div>
<div style="position:absolute;left:129.8px;top:909.8px;width:2.9px;height:2.9px;background:#217346;"></div>
<div style="position:absolute;left:143.6px;top:891.5px;width:84.8px;height:29px;background:#fff;"></div>
<div style="position:absolute;left:143px;top:892.3px;width:1.1px;height:28.6px;background:#c0c0c0;"></div>
<div style="position:absolute;left:228px;top:892.3px;width:1.1px;height:28.6px;background:#c0c0c0;"></div>
<div style="position:absolute;left:142.8px;top:920.3px;width:86.2px;height:2.2px;background:#217346;"></div>
<span class="t" style="left:158.75px;top:896.51px;font-size:17px;line-height:22px;color:#217346;font-weight:700;transform:scaleX(0.9650);">Sheet4</span>
<span class="t" style="left:243.95px;top:896.51px;font-size:17px;line-height:22px;color:#555;transform:scaleX(0.9259);">Sheet3</span>
<div style="position:absolute;left:312.6px;top:898px;width:1px;height:23.5px;background:#b0b0b0;"></div>
<svg style="position:absolute;left:355px;top:899px;" width="21" height="21" viewBox="0 0 21 21"><circle cx="10.4" cy="10.4" r="8.6" fill="none" stroke="#666" stroke-width="2.1"/><path d="M10.4 5.6V15.2M5.6 10.4H15.2" stroke="#666" stroke-width="2.2"/></svg>
<div style="position:absolute;left:425.3px;top:905.5px;width:2px;height:2px;background:#b5b5b5;"></div>
<div style="position:absolute;left:425.3px;top:910.2px;width:2px;height:2px;background:#b5b5b5;"></div>
<div style="position:absolute;left:425.3px;top:914.9px;width:2px;height:2px;background:#b5b5b5;"></div>
<div style="position:absolute;left:444px;top:901px;width:442.5px;height:18px;background:#e8e8e8;"></div>
<div class="box" style="left:444px;top:901px;width:17.6px;height:18px;background:#fbfbfb;border:1px solid #b5b5b5"></div>
<svg style="position:absolute;left:448.5px;top:905.5px;" width="7" height="9" viewBox="0 0 7 9"><path d="M6 0.4V8.6L1 4.5Z" fill="#555"/></svg>
<div class="box" style="left:463.3px;top:901px;width:138.5px;height:18px;background:#fdfdfd;border:1px solid #b5b5b5"></div>
<div class="box" style="left:868px;top:901px;width:18.3px;height:18px;background:#fbfbfb;border:1px solid #b5b5b5"></div>
<svg style="position:absolute;left:874px;top:905.5px;" width="7" height="9" viewBox="0 0 7 9"><path d="M1 0.4V8.6L6 4.5Z" fill="#555"/></svg>
<div class="box" style="left:0;top:927.7px;width:1306px;height:28px;background:#217346;border-radius:0 0 9px 9px"></div>
<span class="t" style="left:12.45px;top:933.59px;font-size:13.6px;line-height:18px;color:#fff;transform:scaleX(0.9237);">Ready</span>
<div style="position:absolute;left:1049.3px;top:942.2px;width:13.6px;height:1.5px;background:#bcd3c6;"></div>
<div style="position:absolute;left:1071px;top:942.5px;width:150px;height:1px;background:#e6efe9;"></div>
<div style="position:absolute;left:1128px;top:936px;width:5px;height:13px;background:#fff;"></div>
<div style="position:absolute;left:1145.8px;top:938.6px;width:1px;height:9px;background:#e6efe9;"></div>
<div style="position:absolute;left:1229px;top:942.2px;width:14px;height:1.4px;background:#bcd3c6;"></div>
<div style="position:absolute;left:1235.3px;top:936px;width:1.4px;height:14px;background:#bcd3c6;"></div>
<span class="t" style="left:1257.65px;top:933.86px;font-size:13.4px;line-height:17px;color:#fff;transform:scaleX(0.9361);">85%</span>
<span class="t" style="left:927.25px;top:242.10px;font-size:20.2px;line-height:26px;color:#1f1f1f;-webkit-text-stroke:0.45px currentColor;transform:scaleX(0.9881);">PivotTable Fields</span>
<svg style="position:absolute;left:1265px;top:246px;" width="15" height="15" viewBox="0 0 15 15"><path d="M1.6 1.6L13 13M13 1.6L1.6 13" stroke="#333" stroke-width="1.5" fill="none"/></svg>
<span class="t" style="left:932.85px;top:276.47px;font-size:14.8px;line-height:19px;color:#222;transform:scaleX(1.0277);">Choose fields to add to report</span>
<div style="position:absolute;left:933px;top:294.5px;width:355px;height:214px;background:#fdfdfb;"></div>
<div style="position:absolute;left:933px;top:294px;width:355px;height:1px;background:#c8c8c8;"></div>
<div style="position:absolute;left:933px;top:507.8px;width:355px;height:1px;background:#c8c8c8;"></div>
<svg style="position:absolute;left:939px;top:299px;" width="16" height="16" viewBox="0 0 16 16"><rect x="0.8" y="0.8" width="14.4" height="14.4" fill="#fff" stroke="#8a8a8a" stroke-width="1.5"/><path d="M3.2 8.2L6.6 11.6L13 3.8" stroke="#555" stroke-width="1.4" fill="none"/></svg>
<span class="t" style="left:963.35px;top:297.87px;font-size:14.8px;line-height:19px;color:#1f1f1f;-webkit-text-stroke:0.45px currentColor;transform:scaleX(1.1100);">id</span>
<svg style="position:absolute;left:1268.3px;top:305.1px;" width="9.4" height="5" viewBox="0 0 9.4 5"><path d="M0 0H9.4L4.7 5Z" fill="#666"/></svg>
<svg style="position:absolute;left:939px;top:326.45px;" width="16" height="16" viewBox="0 0 16 16"><rect x="0.8" y="0.8" width="14.4" height="14.4" fill="#fff" stroke="#8a8a8a" stroke-width="1.5"/><path d="M3.2 8.2L6.6 11.6L13 3.8" stroke="#555" stroke-width="1.4" fill="none"/></svg>
<span class="t" style="left:963.35px;top:325.32px;font-size:14.8px;line-height:19px;color:#1f1f1f;-webkit-text-stroke:0.45px currentColor;transform:scaleX(1.0768);">region</span>
<svg style="position:absolute;left:1268.3px;top:332.55px;" width="9.4" height="5" viewBox="0 0 9.4 5"><path d="M0 0H9.4L4.7 5Z" fill="#666"/></svg>
<svg style="position:absolute;left:939px;top:353.9px;" width="16" height="16" viewBox="0 0 16 16"><rect x="0.8" y="0.8" width="14.4" height="14.4" fill="#fff" stroke="#8a8a8a" stroke-width="1.5"/><path d="M3.2 8.2L6.6 11.6L13 3.8" stroke="#555" stroke-width="1.4" fill="none"/></svg>
<span class="t" style="left:963.35px;top:352.77px;font-size:14.8px;line-height:19px;color:#1f1f1f;-webkit-text-stroke:0.45px currentColor;transform:scaleX(1.0962);">country</span>
<svg style="position:absolute;left:1268.3px;top:360px;" width="9.4" height="5" viewBox="0 0 9.4 5"><path d="M0 0H9.4L4.7 5Z" fill="#666"/></svg>
<svg style="position:absolute;left:939px;top:381.35px;" width="16" height="16" viewBox="0 0 16 16"><rect x="0.8" y="0.8" width="14.4" height="14.4" fill="#fff" stroke="#8a8a8a" stroke-width="1.5"/></svg>
<span class="t" style="left:963.35px;top:380.22px;font-size:14.8px;line-height:19px;color:#1f1f1f;transform:scaleX(1.0314);">city</span>
<svg style="position:absolute;left:1268.3px;top:387.45px;" width="9.4" height="5" viewBox="0 0 9.4 5"><path d="M0 0H9.4L4.7 5Z" fill="#666"/></svg>
<svg style="position:absolute;left:939px;top:408.8px;" width="16" height="16" viewBox="0 0 16 16"><rect x="0.8" y="0.8" width="14.4" height="14.4" fill="#fff" stroke="#8a8a8a" stroke-width="1.5"/><path d="M3.2 8.2L6.6 11.6L13 3.8" stroke="#555" stroke-width="1.4" fill="none"/></svg>
<span class="t" style="left:963.35px;top:407.67px;font-size:14.8px;line-height:19px;color:#1f1f1f;-webkit-text-stroke:0.45px currentColor;transform:scaleX(1.0778);">amount</span>
<svg style="position:absolute;left:1268.3px;top:414.9px;" width="9.4" height="5" viewBox="0 0 9.4 5"><path d="M0 0H9.4L4.7 5Z" fill="#666"/></svg>
<svg style="position:absolute;left:939px;top:436.25px;" width="16" height="16" viewBox="0 0 16 16"><rect x="0.8" y="0.8" width="14.4" height="14.4" fill="#fff" stroke="#8a8a8a" stroke-width="1.5"/></svg>
<span class="t" style="left:963.35px;top:435.12px;font-size:14.8px;line-height:19px;color:#1f1f1f;transform:scaleX(1.0343);">date</span>
<svg style="position:absolute;left:1268.3px;top:442.35px;" width="9.4" height="5" viewBox="0 0 9.4 5"><path d="M0 0H9.4L4.7 5Z" fill="#666"/></svg>
<svg style="position:absolute;left:939px;top:463.7px;" width="16" height="16" viewBox="0 0 16 16"><rect x="0.8" y="0.8" width="14.4" height="14.4" fill="#fff" stroke="#8a8a8a" stroke-width="1.5"/></svg>
<span class="t" style="left:963.35px;top:462.57px;font-size:14.8px;line-height:19px;color:#1f1f1f;transform:scaleX(0.9727);">Days (date)</span>
<svg style="position:absolute;left:1268.3px;top:469.8px;" width="9.4" height="5" viewBox="0 0 9.4 5"><path d="M0 0H9.4L4.7 5Z" fill="#666"/></svg>
<span class="t" style="left:932.85px;top:529.37px;font-size:14.8px;line-height:19px;color:#222;">Drag fields between areas below:</span>
<svg style="position:absolute;left:935.5px;top:562px;" width="15" height="14" viewBox="0 0 15 14"><path d="M0.8 1H13.8L8.9 6.6V12.4L5.7 10.6V6.6Z" fill="#666"/></svg>
<span class="t" style="left:955.85px;top:560.87px;font-size:14.8px;line-height:19px;color:#222;transform:scaleX(0.9657);">Filters</span>
<svg style="position:absolute;left:1119px;top:561.5px;" width="14" height="14" viewBox="0 0 14 14"><rect x="0.4" y="0.6" width="2.6" height="11.6" fill="#666"/><rect x="4.3" y="0.6" width="2.2" height="11.6" fill="#666"/><rect x="7.7" y="0.6" width="1.6" height="11.6" fill="#666"/><rect x="10.6" y="0.6" width="1.2" height="11.6" fill="#666"/></svg>
<span class="t" style="left:1138.35px;top:560.87px;font-size:14.8px;line-height:19px;color:#222;">Columns</span>
<div style="position:absolute;left:933px;top:586px;width:171px;height:88px;background:#fdfdfb;"></div>
<div style="position:absolute;left:1116.2px;top:586px;width:172px;height:88px;background:#fdfdfb;"></div>
<div style="position:absolute;left:1110.1px;top:553.5px;width:1px;height:252px;background:#bdbdbd;"></div>
<div style="position:absolute;left:933px;top:679px;width:355px;height:1px;background:#bdbdbd;"></div>
<svg style="position:absolute;left:936.5px;top:689px;" width="14" height="13" viewBox="0 0 14 13"><rect x="0.3" y="0.3" width="12.6" height="2.6" fill="#666"/><rect x="0.3" y="4.2" width="12.6" height="2.2" fill="#666"/><rect x="0.3" y="7.6" width="12.6" height="1.6" fill="#666"/><rect x="0.3" y="10.4" width="12.6" height="1.2" fill="#666"/></svg>
<span class="t" style="left:955.85px;top:687.87px;font-size:14.8px;line-height:19px;color:#222;transform:scaleX(0.9405);">Rows</span>
<span class="t" style="left:1119.25px;top:681.94px;font-size:19.5px;line-height:25px;color:#555;transform:scaleX(1.2237);font-family:'Liberation Serif','DejaVu Serif',serif;">Σ</span>
<span class="t" style="left:1138.35px;top:687.87px;font-size:14.8px;line-height:19px;color:#222;transform:scaleX(0.9670);">Values</span>
<div style="position:absolute;left:933px;top:712px;width:171px;height:88.7px;background:#fdfdfb;"></div>
<div style="position:absolute;left:1116.2px;top:712px;width:172px;height:88.7px;background:#fdfdfb;"></div>
<div class="box" style="left:1117px;top:587px;width:170px;height:29px;background:#fdfdfb;border:1px solid #c4c4c4"></div>
<span class="t" style="left:1125.65px;top:593.57px;font-size:14.8px;line-height:19px;color:#1f1f1f;transform:scaleX(1.0428);">region</span>
<svg style="position:absolute;left:1266.4px;top:599.6px;" width="9.6" height="5" viewBox="0 0 9.6 5"><path d="M0 0H9.6L4.8 5Z" fill="#666"/></svg>
<div class="box" style="left:1117px;top:617px;width:170px;height:29px;background:#fdfdfb;border:1px solid #c4c4c4"></div>
<span class="t" style="left:1125.65px;top:623.57px;font-size:14.8px;line-height:19px;color:#1f1f1f;transform:scaleX(1.0488);">country</span>
<svg style="position:absolute;left:1266.4px;top:629.6px;" width="9.6" height="5" viewBox="0 0 9.6 5"><path d="M0 0H9.6L4.8 5Z" fill="#666"/></svg>
<div class="box" style="left:934px;top:713px;width:169px;height:29px;background:#fdfdfb;border:1px solid #c4c4c4"></div>
<span class="t" style="left:942.65px;top:719.57px;font-size:14.8px;line-height:19px;color:#1f1f1f;transform:scaleX(1.0840);">id</span>
<svg style="position:absolute;left:1082.4px;top:725.6px;" width="9.6" height="5" viewBox="0 0 9.6 5"><path d="M0 0H9.6L4.8 5Z" fill="#666"/></svg>
<div class="box" style="left:1117px;top:713px;width:170px;height:29px;background:#fdfdfb;border:1px solid #c4c4c4"></div>
<span class="t" style="left:1125.65px;top:719.57px;font-size:14.8px;line-height:19px;color:#1f1f1f;transform:scaleX(1.0225);">Sum of amount</span>
<svg style="position:absolute;left:1266.4px;top:725.6px;" width="9.6" height="5" viewBox="0 0 9.6 5"><path d="M0 0H9.6L4.8 5Z" fill="#666"/></svg>
<svg style="position:absolute;left:939.2px;top:818.6px;" width="16" height="16" viewBox="0 0 16 16"><rect x="0.8" y="0.8" width="14.4" height="14.4" fill="#fff" stroke="#8a8a8a" stroke-width="1.5"/></svg>
<span class="t" style="left:963.45px;top:817.87px;font-size:14.8px;line-height:19px;color:#222;transform:scaleX(1.0070);">Defer Layout Update</span>
<div class="box" style="left:1213px;top:812px;width:75px;height:25px;background:#f9f9f9;border:1px solid #c9c9c9"></div>
<span class="t" style="left:1224.05px;top:813.00px;font-size:17.6px;line-height:23px;color:#bdbdbd;transform:scaleX(0.9483);">Update</span>
<span class="t" style="left:939.05px;top:875.00px;font-size:17.6px;line-height:23px;color:#222;transform:scaleX(0.9523);">Views</span>
<div class="box" style="left:993px;top:871px;width:295px;height:30px;background:#f7f7f7;border:1px solid #c9c9c9"></div>
<div style="position:absolute;left:1025px;top:874px;width:184px;height:21.8px;background:#fdfdfd;"></div>
<svg style="position:absolute;left:1003.8px;top:882.1px;" width="10.6" height="5.6" viewBox="0 0 10.6 5.6"><path d="M0 0H10.6L5.3 5.6Z" fill="#777"/></svg>
<svg style="position:absolute;left:1227px;top:876.8px;" width="17" height="18" viewBox="0 0 17 18"><path d="M1.9 9.9L3.6 8.6L6.3 11.9C8.3 7.6 10.6 4.2 13.6 1.6L14.9 2.4C11.6 6.2 9.4 10.4 7.4 15.6H5.6Z" fill="#111"/></svg>
<div style="position:absolute;left:1260.6px;top:885.1px;width:15.6px;height:3.5px;background:#111;"></div>
<div style="position:absolute;left:1266.7px;top:879px;width:3.5px;height:15.6px;background:#111;"></div>
</div>
</body></html>
